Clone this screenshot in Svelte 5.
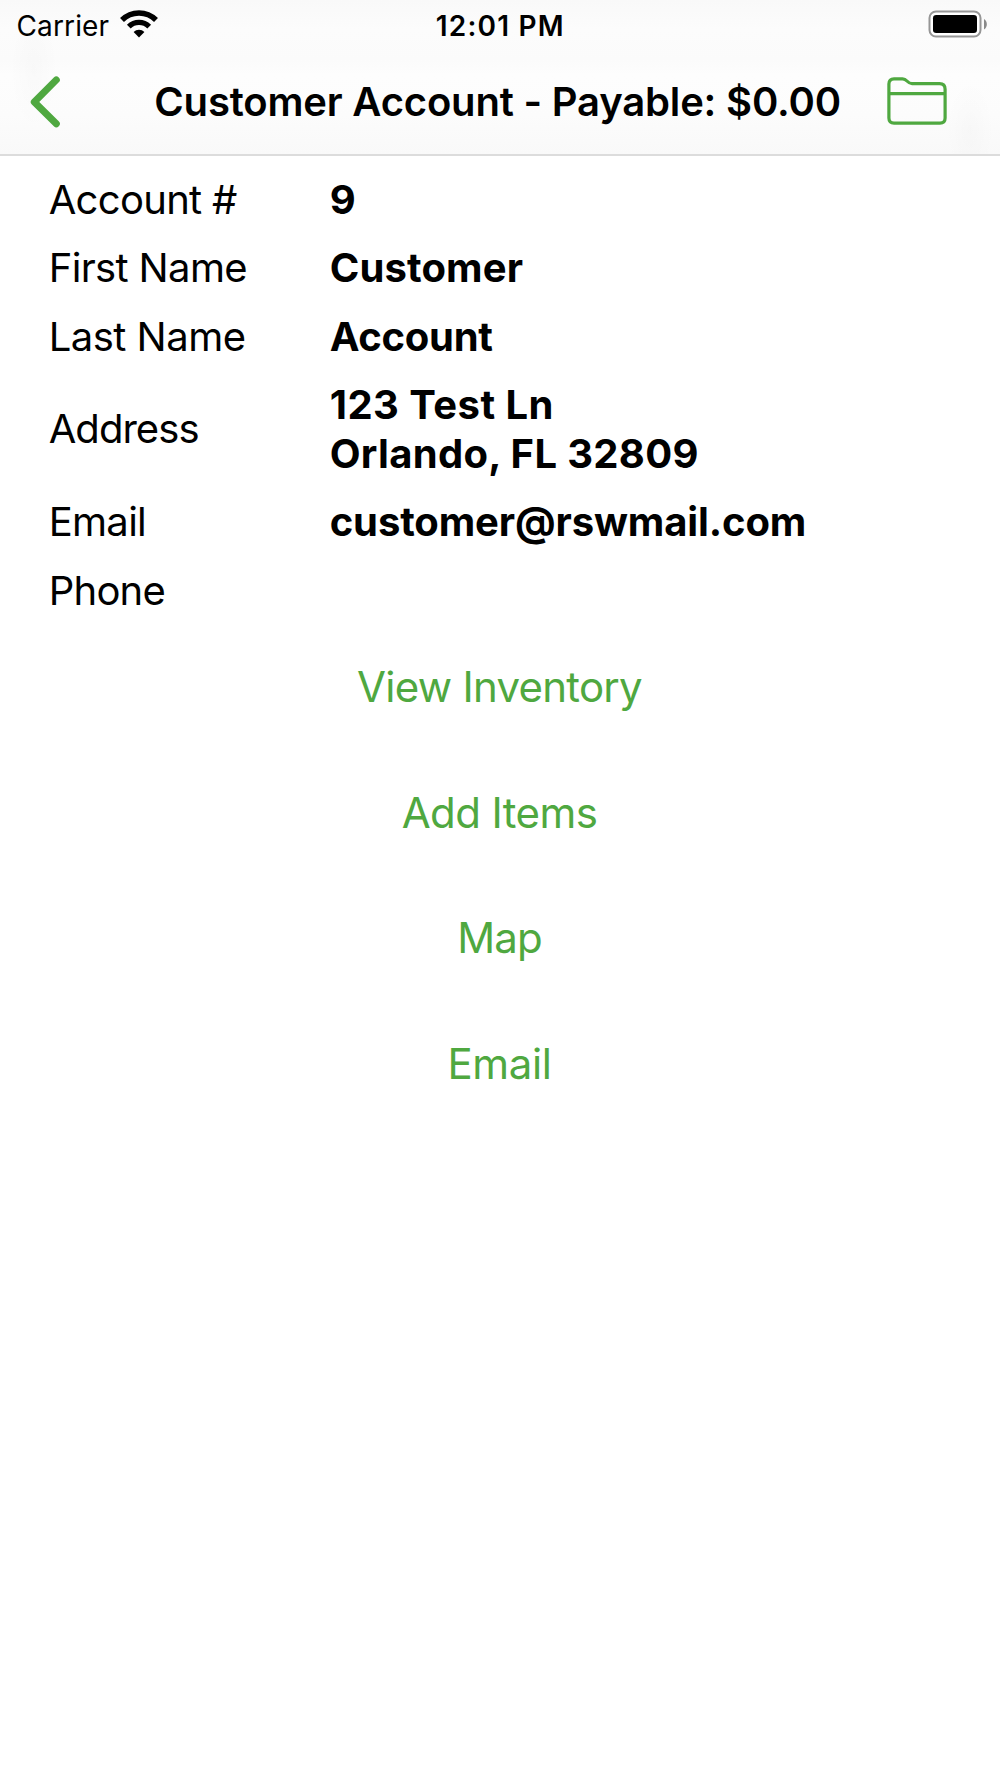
<script>
  // Each text carries its own tracking, in pixels.
  const fields = [
    { label: 'Account #', labelTracking: -0.7, lines: [{ text: '9', tracking: 0 }] },
    { label: 'First Name', labelTracking: -0.65, lines: [{ text: 'Customer', tracking: 0.14 }] },
    { label: 'Last Name', labelTracking: -0.52, lines: [{ text: 'Account', tracking: -0.3 }] },
    {
      label: 'Address',
      labelTracking: -0.95,
      lines: [
        { text: '123 Test Ln', tracking: 0.45 },
        { text: 'Orlando, FL 32809', tracking: 0.32 }
      ]
    },
    { label: 'Email', labelTracking: -0.7, lines: [{ text: 'customer@rswmail.com', tracking: -0.12 }] },
    { label: 'Phone', labelTracking: -0.75, lines: [] }
  ];

  const actions = [
    { text: 'View Inventory', tracking: -0.74 },
    { text: 'Add Items', tracking: -0.59 },
    { text: 'Map', tracking: -0.9 },
    { text: 'Email', tracking: -0.4 }
  ];
</script>

<div class="screen">
  <header>
    <div class="status">
      <div class="carrier">
        <span>Carrier</span>
        <svg class="wifi" viewBox="0 0 38 28" aria-hidden="true">
          <g fill="none" stroke="#000">
            <path d="M2 10A24 24 0 0 1 36 10" stroke-width="5.5" />
            <path d="M8.8 16.6A14.6 14.6 0 0 1 29.2 16.6" stroke-width="5.3" />
          </g>
          <path d="M19 27.5L13.6 22A7.8 7.8 0 0 1 24.4 22Z" />
        </svg>
      </div>
      <div class="clock">12:01 PM</div>
      <div class="power">
        <svg class="battery" viewBox="0 0 60 28" aria-hidden="true">
          <rect x="1.5" y="1.5" width="51" height="25" rx="6.5" fill="#fff" stroke="#969696" stroke-width="2" />
          <rect x="5" y="5" width="44" height="18" rx="3.2" />
          <path d="M56 9C59.8 11 59.8 17.4 56 19.4Z" fill="#8a8a8a" />
        </svg>
      </div>
    </div>

    <nav>
      <button class="icon-button" aria-label="Back">
        <svg class="back" viewBox="0 0 32 52" aria-hidden="true">
          <path d="M27.3 3.9L5.3 26L27.3 47.8" />
        </svg>
      </button>
      <h1>Customer Account - Payable: $0.00</h1>
      <button class="icon-button" aria-label="Folder">
        <svg class="folder" viewBox="0 0 60 48" aria-hidden="true">
          <path d="M1.9 41V7Q1.9 1.9 7 1.9H15.5C20.5 1.9 20 6.6 25 6.6H52.5Q58.1 6.6 58.1 12.2V41Q58.1 46.1 53 46.1H7Q1.9 46.1 1.9 41ZM1.9 16.6H58.1" />
        </svg>
      </button>
    </nav>
  </header>

  <main>
    <dl>
      {#each fields as field}
        <div class="row">
          <dt style:letter-spacing="{field.labelTracking}px">{field.label}</dt>
          <dd>
            {#each field.lines as line}
              <span style:letter-spacing="{line.tracking}px">{line.text}</span>
            {/each}
          </dd>
        </div>
      {/each}
    </dl>

    <div class="actions">
      {#each actions as action}
        <button class="action" style:letter-spacing="{action.tracking}px">{action.text}</button>
      {/each}
    </div>
  </main>
</div>

<style>
  :global(body) {
    margin: 0;
    background: #fff;
  }

  .screen {
    width: 1000px;
    min-height: 1778px;
    box-sizing: border-box;
    background: #fff;
    color: #000;
    font-family: Inter, 'Liberation Sans', sans-serif;
  }

  header {
    height: 156px;
    box-sizing: border-box;
    border-bottom: 2px solid #dcdcdc;
    background:
      radial-gradient(ellipse 24px 60px at 34px 70px, rgb(0 0 0 / 1.5%), transparent),
      radial-gradient(ellipse 24px 50px at 970px 130px, rgb(0 0 0 / 1.5%), transparent),
      linear-gradient(#f9f9f9 0, #fcfcfc 30px, #fbfbfb 60px, #fdfdfd 75px, #fcfcfc 115px, #f9f9f9 154px);
  }

  .status {
    display: grid;
    grid-template-columns: 1fr auto 1fr;
    align-items: center;
    height: 51px;
    padding: 0 12px 0 16.5px;
    font-size: 28px;
    line-height: 34px;
  }

  .carrier {
    display: flex;
    align-items: flex-start;
    gap: 10.4px;
    letter-spacing: 0.13px;
    width: 150px;
  }

  .wifi {
    width: 38px;
    height: 28px;
    margin-top: 1.5px;
  }

  .clock {
    padding-right: 4px;
    font-weight: 600;
    letter-spacing: 1.2px;
  }

  .power {
    display: flex;
    justify-content: flex-end;
  }

  .battery {
    width: 60px;
    height: 28px;
    margin-bottom: 3px;
  }

  nav {
    display: flex;
    align-items: center;
    height: 103px;
    box-sizing: border-box;
    padding: 0 53px 2px 29.2px;
  }

  h1 {
    flex: 1;
    margin: 0;
    padding-left: 47px;
    font-size: 40px;
    font-weight: 600;
    line-height: 48px;
    letter-spacing: -0.18px;
    text-align: center;
    white-space: nowrap;
  }

  button {
    padding: 0;
    border: 0;
    background: none;
    color: #4fa840;
    font-family: inherit;
  }

  .icon-button {
    display: flex;
  }

  .icon-button svg {
    fill: none;
    stroke: currentColor;
    stroke-linejoin: round;
    stroke-linecap: round;
  }

  .back {
    width: 32px;
    height: 52px;
    stroke-width: 7;
  }

  .folder {
    width: 60px;
    height: 48px;
    margin-bottom: 1px;
    stroke-width: 3.2;
  }

  dl {
    margin: 0;
    padding: 9.5px 50px 0 48.7px;
    font-size: 40px;
    line-height: 48.5px;
  }

  .row {
    display: grid;
    grid-template-columns: 281px 1fr;
    align-items: center;
    padding: 10px 0;
  }

  dd {
    display: flex;
    flex-direction: column;
    margin: 0;
    font-weight: 700;
  }

  .actions {
    display: flex;
    flex-direction: column;
    align-items: center;
    gap: 75.5px;
    padding: 37.3px 1px 0 0;
  }

  .action {
    font-size: 42px;
    line-height: 50px;
  }
</style>
